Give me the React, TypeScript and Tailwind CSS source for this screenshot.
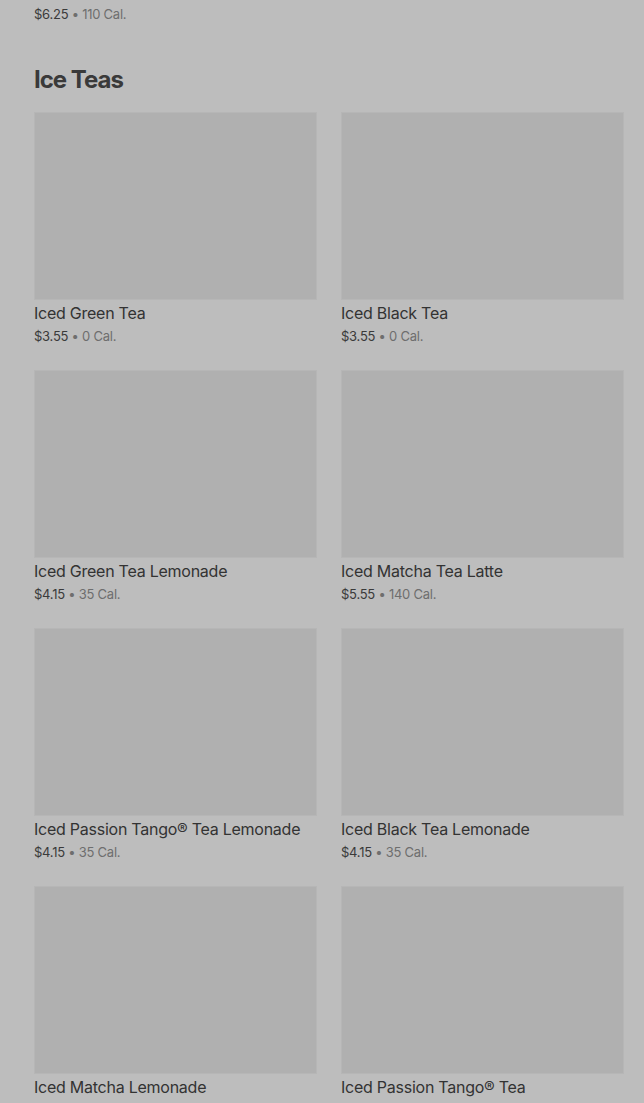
const items = [
  { name: 'Iced Green Tea', price: '$3.55', cal: '0 Cal.' },
  { name: 'Iced Black Tea', price: '$3.55', cal: '0 Cal.' },
  { name: 'Iced Green Tea Lemonade', price: '$4.15', cal: '35 Cal.' },
  { name: 'Iced Matcha Tea Latte', price: '$5.55', cal: '140 Cal.' },
  { name: 'Iced Passion Tango® Tea Lemonade', price: '$4.15', cal: '35 Cal.' },
  { name: 'Iced Black Tea Lemonade', price: '$4.15', cal: '35 Cal.' },
  { name: 'Iced Matcha Lemonade', price: '$4.15', cal: '35 Cal.' },
  { name: 'Iced Passion Tango® Tea', price: '$3.55', cal: '0 Cal.' },
]

function ItemCard({ name, price, cal }: { name: string; price: string; cal: string }) {
  return (
    <div className="flex flex-col">
      <div className="h-[188px] w-full bg-[#b0b0b0] border border-[#b6b6b6]" />
      <div className="mt-[3px] text-[16px] leading-5 tracking-[-0.25px] text-[#333333]">{name}</div>
      <div className="mt-1 text-[13px] leading-[18px] tracking-[-0.25px] text-[#3a3a3a]">
        {price}
        <span className="text-[#6e6e6e]"> • {cal}</span>
      </div>
    </div>
  )
}

export default function App() {
  return (
    <div
      className="min-h-screen w-[644px] overflow-hidden bg-[#bdbdbd] pl-[34px] pr-[20px]"
      style={{ fontFamily: 'Inter, "Noto Sans", sans-serif' }}
    >
      <div className="-mt-[19px] flex flex-col">
        <div className="text-[16px] leading-5 tracking-[-0.25px] text-[#333333]">Iced Caffè Mocha</div>
        <div className="mt-1 text-[13px] leading-[18px] tracking-[-0.25px] text-[#3a3a3a]">
          $6.25
          <span className="text-[#6e6e6e]"> • 110 Cal.</span>
        </div>
      </div>

      <h2 className="mt-[41px] mb-4 text-[24px] leading-8 font-bold tracking-[-1px] text-[#3a3a3a]">
        Ice Teas
      </h2>

      <div className="grid grid-cols-[283px_283px] gap-x-6 gap-y-[25px]">
        {items.map((item) => (
          <ItemCard key={item.name} {...item} />
        ))}
      </div>
    </div>
  )
}
